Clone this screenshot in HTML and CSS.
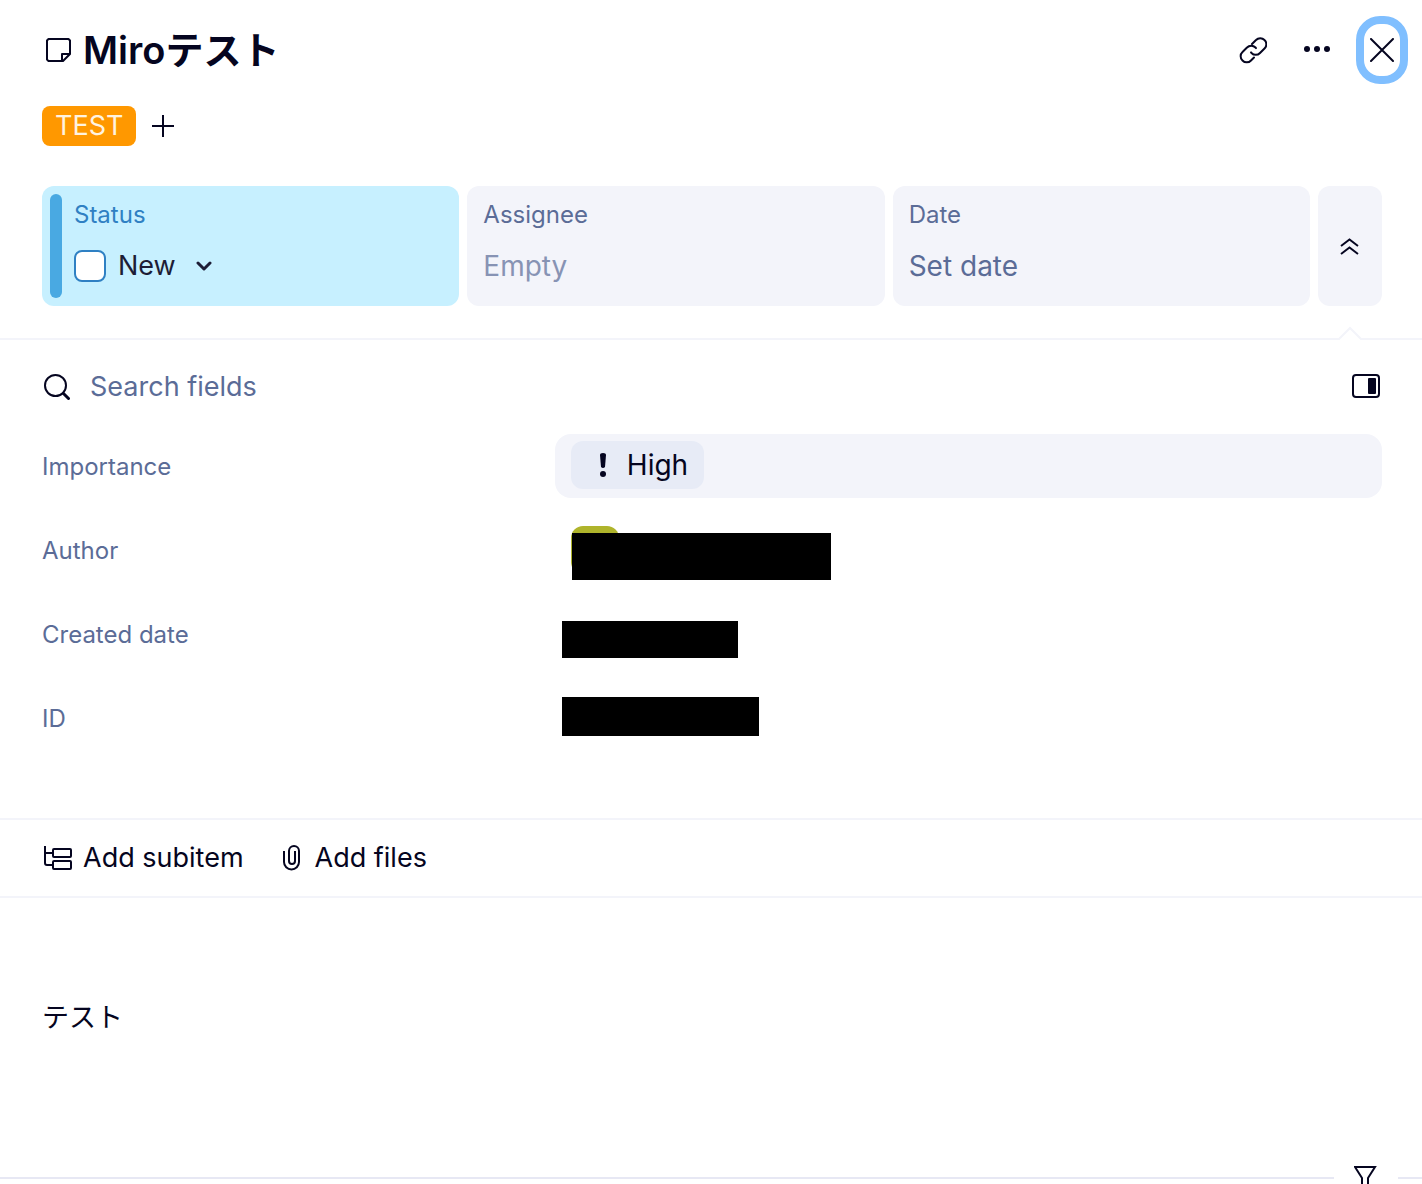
FILE: index.html
```html
<!DOCTYPE html>
<html lang="ja">
<head>
<meta charset="utf-8">
<meta name="viewport" content="width=device-width, initial-scale=1">
<title>Miroテスト</title>
<link rel="stylesheet" href="styles.css">
</head>
<body>
<main class="panel">
  <header class="header">
    <svg class="note-icon" width="26" height="26" viewBox="0 0 26 26" fill="none" stroke="currentColor" stroke-width="2" stroke-linejoin="round"><path d="M17 24H3.500L2 22.500V3.500L3.500 2h20L25 3.500V17l-7 7h-1v-7h8"/></svg>
    <h1 class="title">Miroテスト</h1>
    <div class="actions">
      <button class="icon-button" type="button" aria-label="Copy link">
        <svg width="28" height="28" viewBox="0 0 28 28" fill="none" stroke="currentColor" stroke-width="2" stroke-linecap="round"><path d="M13 8l4-4a5.800 5.800 0 0 1 8.500 0a5.800 5.800 0 0 1 0 8.500l-4.500 4.500a5.800 5.800 0 0 1-8.500 0l-.5-.6"/><path d="M15 21.500l-3 3a5.800 5.800 0 0 1-8.500 0a5.800 5.800 0 0 1 0-8.500l4.500-4.500a5.800 5.800 0 0 1 8.500 0l.5.6"/></svg>
      </button>
      <button class="icon-button" type="button" aria-label="More">
        <svg width="28" height="28" viewBox="0 0 28 28" fill="currentColor"><circle cx="4" cy="13" r="3"/><circle cx="14" cy="13" r="3"/><circle cx="24" cy="13" r="3"/></svg>
      </button>
      <button class="close-button" type="button" aria-label="Close">
        <svg width="24" height="24" viewBox="0 0 24 24" fill="none" stroke="currentColor" stroke-width="2" stroke-linecap="round"><path d="M1 1l22 22M23 1L1 23"/></svg>
      </button>
    </div>
  </header>

  <div class="tags">
    <span class="tag">TEST</span>
    <button class="add-tag" type="button" aria-label="Add tag">
      <svg width="22" height="22" viewBox="0 0 22 22" stroke="currentColor" stroke-width="2"><path d="M11 0v22M0 11h22"/></svg>
    </button>
  </div>

  <section class="cards">
    <div class="card card-status">
      <span class="card-label">Status</span>
      <div class="status-row">
        <input class="status-check" id="done" type="checkbox" aria-label="Completed">
        <button class="status-value" type="button">New
          <svg width="16" height="10" viewBox="0 0 16 10" fill="none" stroke="currentColor" stroke-width="3" stroke-linecap="round" stroke-linejoin="round"><path d="M2 2l6 6 6-6"/></svg>
        </button>
      </div>
    </div>
    <div class="card">
      <span class="card-label">Assignee</span>
      <button class="card-value card-empty" type="button">Empty</button>
    </div>
    <div class="card">
      <span class="card-label">Date</span>
      <button class="card-value" type="button">Set date</button>
    </div>
    <button class="collapse" type="button" aria-label="Collapse fields">
      <svg width="20" height="18" viewBox="0 0 20 18" fill="none" stroke="currentColor" stroke-width="2"><path d="M1 9l8.500-6.500L18 9M1 17l8.500-6.500L18 17"/></svg>
      <svg class="pointer" width="24" height="14" viewBox="0 0 24 14"><path class="pointer-fill" d="M0 14L12 2l12 12z"/><path class="pointer-line" d="M0 13h1L12 2l11 11h1"/></svg>
    </button>
  </section>

  <section class="fields">
    <div class="search">
      <svg width="28" height="28" viewBox="0 0 28 28" fill="none" stroke="currentColor" stroke-linecap="round"><circle cx="13.500" cy="13.500" r="10.500" stroke-width="2"/><path d="M21.500 21.500l5 5" stroke-width="3"/></svg>
      <input class="search-input" type="text" placeholder="Search fields" aria-label="Search fields">
      <button class="icon-button" type="button" aria-label="Toggle side panel">
        <svg width="28" height="24" viewBox="0 0 28 24"><rect x="1" y="1" width="26" height="22" rx="3" fill="none" stroke="currentColor" stroke-width="2"/><rect x="16" y="4" width="8" height="16" rx="1" fill="currentColor"/></svg>
      </button>
    </div>
    <dl class="field-list">
      <div class="field">
        <dt>Importance</dt>
        <dd class="filled">
          <span class="chip">
            <svg width="8" height="26" viewBox="0 0 8 26" fill="currentColor"><path d="M1 3q0-2 3-2t3 2L6 15q-2 2-4 0z"/><circle cx="4" cy="22" r="3"/></svg>
            High
          </span>
        </dd>
      </div>
      <div class="field">
        <dt>Author</dt>
        <dd><span class="avatar"></span><span class="mask mask-author"></span></dd>
      </div>
      <div class="field">
        <dt>Created date</dt>
        <dd><span class="mask mask-date"></span></dd>
      </div>
      <div class="field">
        <dt>ID</dt>
        <dd><span class="mask mask-id"></span></dd>
      </div>
    </dl>
  </section>

  <div class="toolbar">
    <button class="tool" type="button">
      <svg width="28" height="26" viewBox="0 0 28 26" fill="none" stroke="currentColor" stroke-width="2"><path d="M1 1v17q0 2 2 2h6M1 8h8"/><rect x="9" y="4" width="18" height="8" rx="1"/><rect x="9" y="16" width="18" height="8" rx="1"/></svg>
      Add subitem
    </button>
    <button class="tool" type="button">
      <svg width="24" height="28" viewBox="0 0 24 28" fill="none" stroke="currentColor" stroke-width="2"><path d="M4 7v11a7 7 0 0 0 15 0V7a5 5 0 0 0-10 0v10a2.500 2.500 0 0 0 6 0V7"/></svg>
      Add files
    </button>
  </div>

  <section class="description">
    <p>テスト</p>
  </section>

  <footer class="activity">
    <button class="filter" type="button" aria-label="Filter activity">
      <svg width="24" height="26" viewBox="0 0 24 26" fill="none" stroke="currentColor" stroke-width="2"><path d="M1 1h20l-7 11v13H8V12z"/></svg>
    </button>
  </footer>
</main>
</body>
</html>
```
FILE: styles.css
```css
* {
  box-sizing: border-box;
}

body {
  margin: 0;
  background: #fff;
  color: #050520;
  font: 27px/32px Inter, "Noto Sans CJK JP", sans-serif;
}

button {
  padding: 0;
  border: 0;
  background: none;
  color: inherit;
  font: inherit;
  cursor: pointer;
}

svg {
  display: block;
  flex: none;
}

.panel {
  display: flex;
  flex-direction: column;
  min-height: 100vh;
}

.header {
  display: flex;
  align-items: center;
  gap: 12px;
  padding: 16px 14px 16px 45px;
}

.title {
  flex: 1;
  margin: 0;
  font-size: 38px;
  line-height: 48px;
  font-weight: 600;
}

.actions {
  display: flex;
  align-items: center;
  gap: 24px;
}

.icon-button {
  display: grid;
  place-items: center;
  min-width: 40px;
  height: 40px;
}

.actions .close-button {
  display: grid;
  place-items: center;
  width: 52px;
  height: 68px;
  margin-left: -5px;
  border: 8px solid #80bfff;
  border-radius: 24px;
}

.tags {
  display: flex;
  align-items: center;
  gap: 16px;
  padding: 6px 42px 40px;
}

.tag {
  padding: 4px 13px;
  border-radius: 8px;
  background: #ff9800;
  color: #fff3e0;
}

.cards {
  display: grid;
  grid-template-columns: repeat(3, 1fr) 64px;
  gap: 8px;
  padding: 0 40px 32px 42px;
  border-bottom: 2px solid #f3f4fa;
}

.card,
.collapse {
  position: relative;
  height: 120px;
  border-radius: 12px;
  background: #f3f4fa;
}

.card {
  display: flex;
  flex-direction: column;
  align-items: flex-start;
  gap: 19px;
  padding: 13px 16px;
  color: #5b6c97;
  font-size: 28px;
}

.card-label {
  font-size: 24px;
}

.card-empty {
  color: #8793b4;
}

.card-status {
  padding-left: 32px;
  background: #c7f0ff;
  color: #2f80c3;
}

.card-status::before {
  content: "";
  position: absolute;
  top: 8px;
  bottom: 8px;
  left: 8px;
  width: 12px;
  border-radius: 6px;
  background: #49a9e2;
}

.status-row,
.status-value {
  display: flex;
  align-items: center;
}

.status-row {
  gap: 12px;
}

.status-value {
  gap: 20px;
  color: #1d1d36;
  font-size: 27px;
}

.status-check {
  appearance: none;
  width: 32px;
  height: 32px;
  margin: 0;
  border: 2px solid #2f80c3;
  border-radius: 8px;
  background: #fff;
}

.collapse {
  display: grid;
  place-items: center;
}

.pointer {
  position: absolute;
  bottom: -34px;
  left: 20px;
}

.pointer-fill {
  fill: #fff;
}

.pointer-line {
  fill: none;
  stroke: #f3f4fa;
  stroke-width: 2;
}

.fields {
  padding: 26px 40px 68px 42px;
  border-bottom: 2px solid #f3f4fa;
}

.search {
  display: flex;
  align-items: center;
  gap: 20px;
  margin-bottom: 28px;
}

.search .icon-button {
  min-width: 32px;
}

.search-input {
  flex: 1;
  padding: 2px 0 0;
  border: 0;
  outline: 0;
  background: none;
  color: inherit;
  font: inherit;
}

.search-input::placeholder {
  color: #5b6c97;
}

.field-list {
  display: grid;
  gap: 20px;
  margin: 0;
}

.field {
  display: grid;
  grid-template-columns: 31fr 50fr;
  align-items: center;
}

.field dt {
  padding-top: 2px;
  color: #5b6c97;
  font-size: 24px;
}

.field dd {
  position: relative;
  height: 64px;
  margin: 0;
  padding: 7px 16px;
  border-radius: 16px;
}

.field .filled {
  background: #f3f4fa;
}

.chip {
  display: inline-flex;
  align-items: center;
  gap: 20px;
  padding: 8px 16px 8px 28px;
  border-radius: 12px;
  background: #e7ebf6;
  font-size: 28px;
}

.avatar {
  display: block;
  width: 48px;
  height: 48px;
  margin-top: 1px;
  border-radius: 12px;
  background: #afb42b;
}

.mask {
  position: absolute;
  left: 7px;
  background: #000;
}

.mask-author {
  top: 15px;
  left: 17px;
  width: 259px;
  height: 47px;
}

.mask-date {
  top: 19px;
  width: 176px;
  height: 37px;
}

.mask-id {
  top: 11px;
  width: 197px;
  height: 39px;
}

.toolbar {
  display: flex;
  gap: 36px;
  padding: 22px 44px;
  border-bottom: 2px solid #f3f4fa;
}

.tool {
  display: flex;
  align-items: center;
  gap: 11px;
}

.description {
  flex: 1;
  padding: 104px 42px;
}

.description p {
  margin: 0;
}

.activity {
  display: flex;
  align-items: flex-start;
  height: 20px;
  overflow: hidden;
}

.activity::before,
.activity::after {
  content: "";
  width: 24px;
  height: 2px;
  margin-top: 13px;
  background: #e7e8f4;
}

.activity::before {
  flex: 1;
}

.filter {
  display: grid;
  justify-items: center;
  width: 64px;
  padding-top: 2px;
}
```
